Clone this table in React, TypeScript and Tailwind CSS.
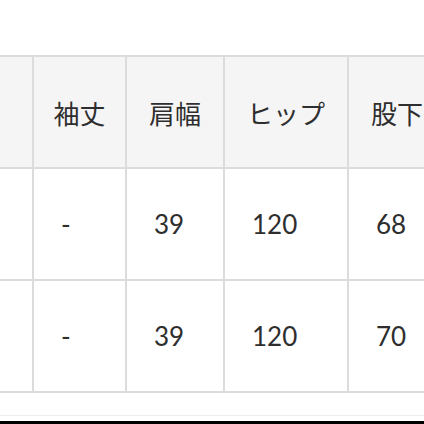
const headers = ['', '袖丈', '肩幅', 'ヒップ', '股下']
const rows = [
  ['', '-', '39', '120', '68'],
  ['', '-', '39', '120', '70'],
]

export default function App() {
  return (
    <div className="w-[424px] h-[424px] overflow-hidden bg-white flex flex-col">
      <div className="h-[55px] shrink-0" />
      <div className="w-[445px] shrink-0 bg-[#dcdcdc] pt-[2px] pb-[2px] grid grid-cols-[32px_91px_96px_122px_96px] gap-[2px]">
        {headers.map((h, i) => (
          <div
            key={'h' + i}
            className="h-[110px] bg-[#f5f5f5] flex items-center justify-center text-[26px] text-[#2e2e2e] whitespace-nowrap font-['Noto_Sans_CJK_JP',sans-serif]"
          >
            {h}
          </div>
        ))}
        {rows.map((r, ri) =>
          r.map((c, ci) => (
            <div
              key={ri + '-' + ci}
              className="h-[110px] bg-white flex items-center pl-[27px] text-[26px] text-[#2e2e2e] font-['Lato','Noto_Sans_CJK_JP',sans-serif]"
            >
              {c}
            </div>
          ))
        )}
      </div>
      <div className="h-[22px] shrink-0" />
      <div className="h-px shrink-0 bg-[#ececec]" />
      <div className="flex-1" />
      <div className="h-[3px] shrink-0 bg-black" />
    </div>
  )
}
